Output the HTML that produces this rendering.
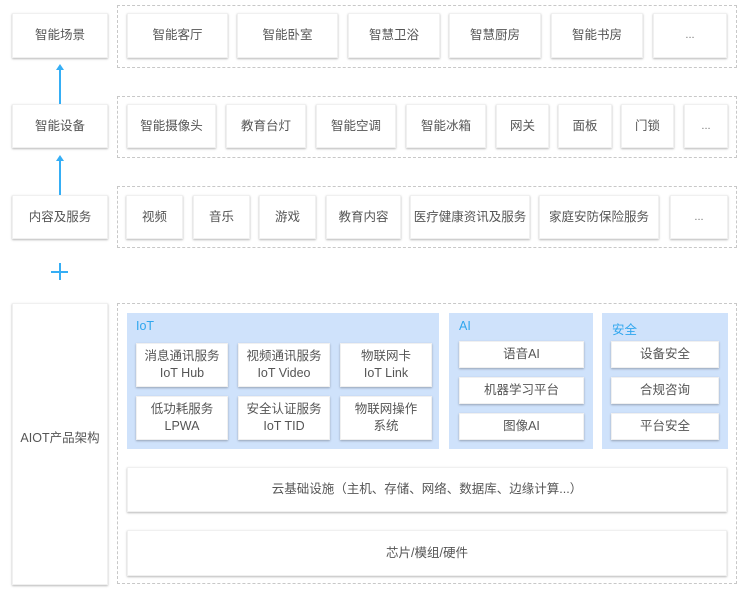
<!DOCTYPE html>
<html><head><meta charset="utf-8"><style>
*{margin:0;padding:0;box-sizing:border-box}
body{width:741px;height:589px;background:#fff;position:relative;overflow:hidden;font-family:"Liberation Sans","Noto Sans CJK SC",sans-serif;font-size:12.5px;color:#555}
.b{position:absolute;background:#fff;box-shadow:0 1px 2px rgba(0,0,0,.28);display:flex;align-items:center;justify-content:center;text-align:center;line-height:17px;border:1px solid #f0f0f0}
.e{color:#777;font-size:11px}
.d{position:absolute;border:1px dashed #c8c8c8}
.p{position:absolute;background:#cfe2fb}
.t{position:absolute;color:#2fa6ee;font-size:12.5px}
.v{position:absolute;width:1.5px;background:#35aef5;left:59px}
.ah{position:absolute;left:56px;width:0;height:0;border-left:4px solid transparent;border-right:4px solid transparent;border-bottom:6px solid #35aef5}
</style></head><body>
<div class="b" style="left:12px;top:13px;width:96px;height:45px">智能场景</div>
<div class="b" style="left:12px;top:104px;width:96px;height:44px">智能设备</div>
<div class="b" style="left:12px;top:195px;width:96px;height:44px">内容及服务</div>
<div class="ah" style="top:64px"></div><div class="v" style="top:68px;height:36px"></div>
<div class="ah" style="top:155px"></div><div class="v" style="top:159px;height:36px"></div>
<div style="position:absolute;left:51px;top:271px;width:17px;height:1.5px;background:#35aef5"></div>
<div style="position:absolute;left:59px;top:263px;width:1.5px;height:17px;background:#35aef5"></div>

<div class="d" style="left:117px;top:5px;width:620px;height:63px"></div>
<div class="b" style="left:127px;top:13px;width:101px;height:45px">智能客厅</div>
<div class="b" style="left:237px;top:13px;width:101px;height:45px">智能卧室</div>
<div class="b" style="left:348px;top:13px;width:92px;height:45px">智慧卫浴</div>
<div class="b" style="left:449px;top:13px;width:92px;height:45px">智慧厨房</div>
<div class="b" style="left:551px;top:13px;width:92px;height:45px">智能书房</div>
<div class="b e" style="left:653px;top:13px;width:74px;height:45px">...</div>

<div class="d" style="left:117px;top:96px;width:620px;height:62px"></div>
<div class="b" style="left:127px;top:104px;width:89px;height:44px">智能摄像头</div>
<div class="b" style="left:226px;top:104px;width:80px;height:44px">教育台灯</div>
<div class="b" style="left:316px;top:104px;width:80px;height:44px">智能空调</div>
<div class="b" style="left:406px;top:104px;width:80px;height:44px">智能冰箱</div>
<div class="b" style="left:496px;top:104px;width:53px;height:44px">网关</div>
<div class="b" style="left:558px;top:104px;width:54px;height:44px">面板</div>
<div class="b" style="left:621px;top:104px;width:53px;height:44px">门锁</div>
<div class="b e" style="left:684px;top:104px;width:44px;height:44px">...</div>

<div class="d" style="left:117px;top:186px;width:620px;height:62px"></div>
<div class="b" style="left:126px;top:195px;width:57px;height:44px">视频</div>
<div class="b" style="left:193px;top:195px;width:57px;height:44px">音乐</div>
<div class="b" style="left:259px;top:195px;width:57px;height:44px">游戏</div>
<div class="b" style="left:326px;top:195px;width:75px;height:44px">教育内容</div>
<div class="b" style="left:410px;top:195px;width:120px;height:44px">医疗健康资讯及服务</div>
<div class="b" style="left:539px;top:195px;width:120px;height:44px">家庭安防保险服务</div>
<div class="b e" style="left:670px;top:195px;width:58px;height:44px">...</div>

<div class="b" style="left:12px;top:303px;width:96px;height:282px;align-items:flex-start;padding-top:126px">AIOT产品架构</div>
<div class="d" style="left:117px;top:303px;width:620px;height:281px"></div>

<div class="p" style="left:127px;top:313px;width:312px;height:136px"></div>
<div class="t" style="left:136px;top:319px">IoT</div>
<div class="b" style="left:136px;top:343px;width:92px;height:44px">消息通讯服务<br>IoT Hub</div>
<div class="b" style="left:238px;top:343px;width:92px;height:44px">视频通讯服务<br>IoT Video</div>
<div class="b" style="left:340px;top:343px;width:92px;height:44px">物联网卡<br>IoT Link</div>
<div class="b" style="left:136px;top:396px;width:92px;height:44px">低功耗服务<br>LPWA</div>
<div class="b" style="left:238px;top:396px;width:92px;height:44px">安全认证服务<br>IoT TID</div>
<div class="b" style="left:340px;top:396px;width:92px;height:44px">物联网操作<br>系统</div>

<div class="p" style="left:449px;top:313px;width:144px;height:136px"></div>
<div class="t" style="left:459px;top:319px">AI</div>
<div class="b" style="left:459px;top:341px;width:125px;height:27px">语音AI</div>
<div class="b" style="left:459px;top:377px;width:125px;height:27px">机器学习平台</div>
<div class="b" style="left:459px;top:413px;width:125px;height:27px">图像AI</div>

<div class="p" style="left:602px;top:313px;width:126px;height:136px"></div>
<div class="t" style="left:612px;top:319px">安全</div>
<div class="b" style="left:611px;top:341px;width:108px;height:27px">设备安全</div>
<div class="b" style="left:611px;top:377px;width:108px;height:27px">合规咨询</div>
<div class="b" style="left:611px;top:413px;width:108px;height:27px">平台安全</div>

<div class="b" style="left:127px;top:467px;width:600px;height:45px">云基础设施（主机、存储、网络、数据库、边缘计算...）</div>
<div class="b" style="left:127px;top:530px;width:600px;height:46px">芯片/模组/硬件</div>
</body></html>
